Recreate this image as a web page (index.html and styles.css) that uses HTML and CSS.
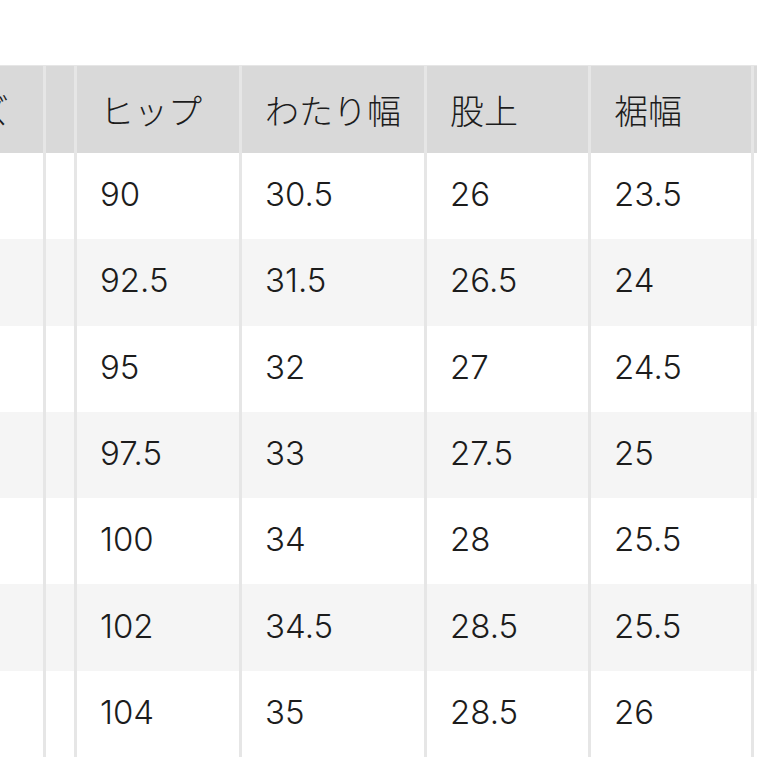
FILE: index.html
```html
<!DOCTYPE html>
<html lang="ja">
<head>
<meta charset="utf-8">
<title>サイズ表</title>
<link rel="stylesheet" href="styles.css">
</head>
<body>
<div class="viewport">
  <div class="table">
    <div class="row head">
      <div class="cell">サイズ</div>
      <div class="cell"></div>
      <div class="cell">ヒップ</div>
      <div class="cell">わたり幅</div>
      <div class="cell">股上</div>
      <div class="cell">裾幅</div>
      <div class="cell"></div>
    </div>
    <div class="row"><div class="cell"></div><div class="cell"></div><div class="cell">90</div><div class="cell">30.5</div><div class="cell">26</div><div class="cell">23.5</div><div class="cell"></div></div>
    <div class="row alt"><div class="cell"></div><div class="cell"></div><div class="cell">92.5</div><div class="cell">31.5</div><div class="cell">26.5</div><div class="cell">24</div><div class="cell"></div></div>
    <div class="row"><div class="cell"></div><div class="cell"></div><div class="cell">95</div><div class="cell">32</div><div class="cell">27</div><div class="cell">24.5</div><div class="cell"></div></div>
    <div class="row alt"><div class="cell"></div><div class="cell"></div><div class="cell">97.5</div><div class="cell">33</div><div class="cell">27.5</div><div class="cell">25</div><div class="cell"></div></div>
    <div class="row"><div class="cell"></div><div class="cell"></div><div class="cell">100</div><div class="cell">34</div><div class="cell">28</div><div class="cell">25.5</div><div class="cell"></div></div>
    <div class="row alt"><div class="cell"></div><div class="cell"></div><div class="cell">102</div><div class="cell">34.5</div><div class="cell">28.5</div><div class="cell">25.5</div><div class="cell"></div></div>
    <div class="row last"><div class="cell"></div><div class="cell"></div><div class="cell">104</div><div class="cell">35</div><div class="cell">28.5</div><div class="cell">26</div><div class="cell"></div></div>
  </div>
</div>
</body>
</html>
```
FILE: styles.css
```css
html, body {
  margin: 0;
  padding: 0;
  background: #ffffff;
}
body {
  width: 757px;
  height: 757px;
  overflow: hidden;
  font-family: "Inter", "Noto Sans CJK JP", "Noto Sans", sans-serif;
  color: #1c1c1c;
}
.viewport {
  padding-top: 65px;
  overflow: hidden;
  width: 757px;
}
.table {
  margin-left: -115px;
  width: 1000px;
}
.row {
  display: grid;
  grid-template-columns: 161px 31px 165px 185px 164px 163px 1fr;
  height: 86.3px;
}
.row.head {
  height: 88px;
  background: #d9d9d9;
  border-top: 1px solid #e6e6e6;
  box-sizing: border-box;
}
.row.alt {
  background: #f5f5f5;
}
.row.last {
  border-bottom: 2px solid #dcdcdc;
}
.cell {
  box-sizing: border-box;
  border-right: 3px solid #e6e6e6;
  padding-left: 23px;
  display: flex;
  align-items: center;
  font-size: 33px;
  font-weight: 300;
  line-height: 1;
  white-space: nowrap;
  padding-bottom: 3px;
}
.head .cell {
  padding-bottom: 0;
  font-family: "Noto Sans CJK JP", sans-serif;
  font-size: 34px;
}
```
